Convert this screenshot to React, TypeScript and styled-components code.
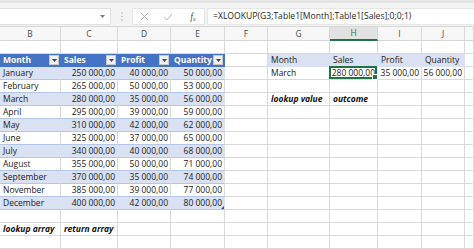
import React from "react";
import styled, { createGlobalStyle, css } from "styled-components";

const Global = createGlobalStyle`
  html, body { margin: 0; padding: 0; background: #ffffff; }
  body {
    width: 474px; height: 249px; overflow: hidden;
    font-family: "Open Sans", "Liberation Sans", sans-serif;
  }
`;

const COLS = "61px 57px 53px 54px 43px 62px 48px 44px 43px 1fr";
const LETTERS = ["B", "C", "D", "E", "F", "G", "H", "I", "J", ""];

const Page = styled.div`
  width: 474px;
  height: 249px;
  overflow: hidden;
  display: flex;
  flex-direction: column;
`;

const Toolbar = styled.div`
  height: 30px;
  box-sizing: border-box;
  background: #f3f3f3;
  border-top: 3px solid #e4e4e4;
  border-bottom: 1px solid #d6d6d6;
  padding-top: 5px;
  display: flex;
  align-items: flex-start;
`;

const NameBox = styled.div`
  width: 111px;
  height: 17px;
  box-sizing: border-box;
  background: #ffffff;
  border: 1px solid #e0e0e0;
  border-left: none;
  display: flex;
  align-items: center;
  justify-content: flex-end;
  padding-right: 5px;
`;

const Grip = styled.div`
  width: 21px;
  height: 17px;
  display: flex;
  align-items: center;
  justify-content: center;
`;

const IconBox = styled.div`
  width: 73px;
  height: 17px;
  box-sizing: border-box;
  background: #ffffff;
  border: 1px solid #e6e6e6;
  display: grid;
  grid-template-columns: 22px 25px 26px;
  align-items: center;
  justify-items: center;
`;

const Fx = styled.span`
  font-family: "Liberation Serif", serif;
  font-style: italic;
  font-size: 10px;
  color: #555555;
  line-height: 1;
  & > sub {
    font-size: 6px;
    vertical-align: -1px;
  }
`;

const Formula = styled.div`
  flex: 1;
  height: 17px;
  margin-left: 2px;
  box-sizing: border-box;
  background: #ffffff;
  border: 1px solid #e6e6e6;
  border-right: none;
  padding-left: 5px;
  font-size: 8.6px;
  line-height: 15px;
  color: #262626;
  white-space: nowrap;
`;

const HeaderRow = styled.div`
  display: grid;
  grid-template-columns: ${COLS};
  height: 14px;
  box-sizing: border-box;
  background: #f7f7f7;
  border-bottom: 1px solid #d4d4d4;
`;

const ColHead = styled.div<{ $active?: boolean }>`
  box-sizing: border-box;
  border-right: 1px solid #d8d8d8;
  font-size: 8.4px;
  line-height: 13px;
  text-align: center;
  color: #4a4a4a;
  ${(p) =>
    p.$active &&
    css`
      background: #e2e2e2;
      color: #217346;
      border-bottom: 2px solid #217346;
      line-height: 12px;
    `}
`;

const Grid = styled.div`
  display: flex;
  flex-direction: column;
`;

const Row = styled.div`
  display: grid;
  grid-template-columns: ${COLS};
  height: 13px;
`;

type Fill = "none" | "head" | "band" | "body" | "lite";

const Cell = styled.div<{ $fill: Fill; $right?: boolean; $em?: boolean }>`
  position: relative;
  height: 13px;
  box-sizing: border-box;
  border-right: 1px solid #d9d9d9;
  border-bottom: 1px solid #d9d9d9;
  padding: 0 2px 0 3px;
  font-size: 8.5px;
  line-height: 12px;
  white-space: nowrap;
  color: #222222;
  display: flex;
  align-items: center;
  justify-content: ${(p) => (p.$right ? "flex-end" : "flex-start")};
  ${(p) =>
    p.$em &&
    css`
      font-weight: 700;
      font-style: italic;
      color: #111111;
    `}
  ${(p) =>
    p.$fill === "head" &&
    css`
      background: #4472c4;
      color: #ffffff;
      font-weight: 700;
      border-right-color: #4472c4;
      border-bottom-color: #4472c4;
      justify-content: space-between;
      padding-right: 1px;
    `}
  ${(p) =>
    p.$fill === "band" &&
    css`
      background: #d9e1f2;
      border-right-color: #d9e1f2;
      border-bottom-color: #b4c6e7;
    `}
  ${(p) =>
    p.$fill === "body" &&
    css`
      border-bottom-color: #b4c6e7;
    `}
  ${(p) =>
    p.$fill === "lite" &&
    css`
      background: #d9e1f2;
      border-right-color: #d9e1f2;
      border-bottom-color: #d9e1f2;
    `}
`;

const FilterButton = styled.span`
  width: 10px;
  height: 10px;
  box-sizing: border-box;
  background: #f0f0f0;
  border: 1px solid #c9c9c9;
  display: flex;
  align-items: center;
  justify-content: center;
  flex-shrink: 0;
`;

const Selection = styled.span`
  position: absolute;
  left: -1px;
  top: -1px;
  right: 0;
  bottom: 0;
  border: 2px solid #217346;
  pointer-events: none;
`;

const FillHandle = styled.span`
  position: absolute;
  right: -3px;
  bottom: -3px;
  width: 4px;
  height: 4px;
  background: #217346;
  border: 1px solid #ffffff;
`;

const ResizeHandle = styled.span`
  position: absolute;
  right: 0;
  bottom: 0;
  width: 0;
  height: 0;
  border-left: 3px solid transparent;
  border-bottom: 3px solid #2f5597;
`;

type CellSpec = {
  text?: string;
  fill?: Fill;
  right?: boolean;
  em?: boolean;
  filter?: boolean;
  selected?: boolean;
  resize?: boolean;
};

const months: [string, string, string, string][] = [
  ["January", "250 000,00", "40 000,00", "50 000,00"],
  ["February", "265 000,00", "50 000,00", "53 000,00"],
  ["March", "280 000,00", "35 000,00", "56 000,00"],
  ["April", "295 000,00", "39 000,00", "59 000,00"],
  ["May", "310 000,00", "42 000,00", "62 000,00"],
  ["June", "325 000,00", "37 000,00", "65 000,00"],
  ["July", "340 000,00", "40 000,00", "68 000,00"],
  ["August", "355 000,00", "50 000,00", "71 000,00"],
  ["September", "370 000,00", "35 000,00", "74 000,00"],
  ["November", "385 000,00", "39 000,00", "77 000,00"],
  ["December", "400 000,00", "42 000,00", "80 000,00"],
];

const blank = (): CellSpec => ({});

function buildRows(): CellSpec[][] {
  const rows: CellSpec[][] = [];
  for (let r = 1; r <= 16; r++) {
    const row: CellSpec[] = Array.from({ length: 10 }, blank);
    if (r === 2) {
      ["Month", "Sales", "Profit", "Quantity"].forEach((t, i) => {
        row[i] = { text: t, fill: "head", filter: true };
      });
      ["Month", "Sales", "Profit", "Quantity"].forEach((t, i) => {
        row[5 + i] = { text: t, fill: "lite" };
      });
    } else if (r >= 3 && r <= 13) {
      const m = months[r - 3];
      const fill: Fill = (r - 3) % 2 === 0 ? "band" : "body";
      m.forEach((t, i) => {
        row[i] = { text: t, fill, right: i > 0 };
      });
      if (r === 13) row[3].resize = true;
    }
    if (r === 3) {
      row[5] = { text: "March" };
      row[6] = { text: "280 000,00", right: true, selected: true };
      row[7] = { text: "35 000,00", right: true };
      row[8] = { text: "56 000,00", right: true };
    }
    if (r === 5) {
      row[5] = { text: "lookup value", em: true };
      row[6] = { text: "outcome", em: true };
    }
    if (r === 15) {
      row[0] = { text: "lookup array", em: true };
      row[1] = { text: "return array", em: true };
    }
    rows.push(row);
  }
  return rows;
}

const Caret = () => (
  <svg width="5" height="3" viewBox="0 0 5 3">
    <path d="M0 0H5L2.5 3Z" fill="#444" />
  </svg>
);

const ROWS = buildRows();

export default function App() {
  return (
    <Page>
      <Global />
      <Toolbar>
        <NameBox>
          <svg width="5" height="3" viewBox="0 0 5 3">
            <path d="M0 0H5L2.5 3Z" fill="#7a7a7a" />
          </svg>
        </NameBox>
        <Grip>
          <svg width="2" height="9" viewBox="0 0 2 9">
            <circle cx="1" cy="1" r="0.8" fill="#b4b4b4" />
            <circle cx="1" cy="4.5" r="0.8" fill="#b4b4b4" />
            <circle cx="1" cy="8" r="0.8" fill="#b4b4b4" />
          </svg>
        </Grip>
        <IconBox>
          <svg width="9" height="9" viewBox="0 0 9 9">
            <path d="M1 1L8 8M8 1L1 8" stroke="#b2b2b2" strokeWidth="1" />
          </svg>
          <svg width="10" height="8" viewBox="0 0 10 8">
            <path d="M1 4.2L3.8 7L9 1" stroke="#b2b2b2" strokeWidth="1" fill="none" />
          </svg>
          <Fx>
            f<sub>x</sub>
          </Fx>
        </IconBox>
        <Formula>=XLOOKUP(G3;Table1[Month];Table1[Sales];0;0;1)</Formula>
      </Toolbar>
      <HeaderRow>
        {LETTERS.map((l, i) => (
          <ColHead key={i} $active={l === "H"}>
            {l}
          </ColHead>
        ))}
      </HeaderRow>
      <Grid>
        {ROWS.map((row, ri) => (
          <Row key={ri}>
            {row.map((c, ci) => (
              <Cell key={ci} $fill={c.fill ?? "none"} $right={c.right} $em={c.em}>
                {c.text && <span>{c.text}</span>}
                {c.filter && (
                  <FilterButton>
                    <Caret />
                  </FilterButton>
                )}
                {c.selected && (
                  <Selection>
                    <FillHandle />
                  </Selection>
                )}
                {c.resize && <ResizeHandle />}
              </Cell>
            ))}
          </Row>
        ))}
      </Grid>
    </Page>
  );
}
